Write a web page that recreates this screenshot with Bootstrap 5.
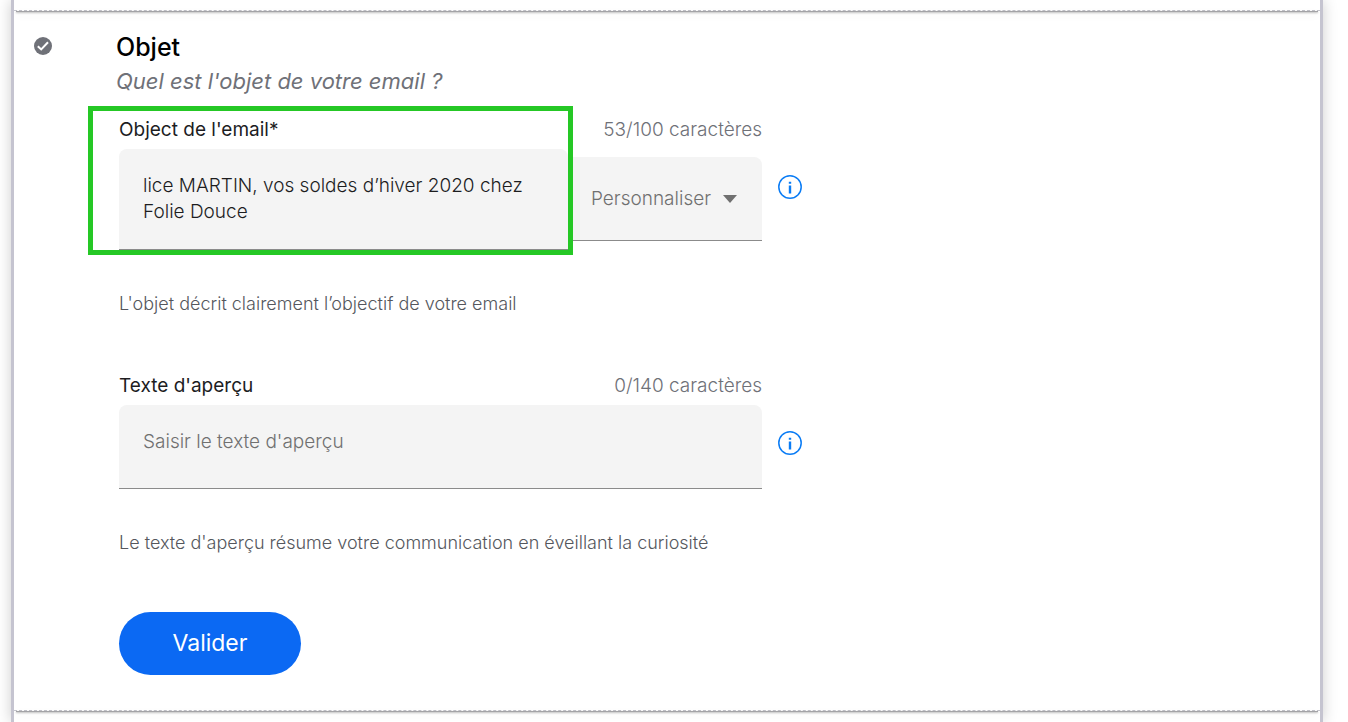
<!DOCTYPE html>
<html lang="fr">
<head>
<meta charset="utf-8">
<meta name="viewport" content="width=device-width, initial-scale=1">
<title>Objet de l'email</title>
<link href="https://cdn.jsdelivr.net/npm/bootstrap@5.3.0/dist/css/bootstrap.min.css" rel="stylesheet">
<style>
body { font-family: Inter, "Open Sans", sans-serif; font-size: 19px; line-height: 26px; color: #1d1d1f; background: #fff; }
.frame { margin: 0 25px 0 11px; border: solid #c5c4d0; border-width: 0 3px; box-shadow: 0 0 14px rgba(0,0,0,.2); background: #fff; }
.step { border-bottom: 1px dashed #c5c5cc; }
.step::after { content: ""; display: block; position: absolute; left: 2px; right: 2px; top: 100%; height: 1px; margin-top: 1px; background: #a3a3a6; box-shadow: 0 1px 2px rgba(0,0,0,.35), 0 3px 8px rgba(0,0,0,.12); }
.step-prev { height: 11px; }
.step-current { padding: 20px 20px 35px; }
.step-mark { width: 18px; height: 18px; margin-top: 6px; }
.step-body { margin-left: 67px; max-width: 685px; }
.step-head { margin: 0 0 19px -3px; }
.step-title { font-size: 25px; line-height: 32px; font-weight: 500; color: #000; }
.step-sub { font-size: 22px; line-height: 34px; font-style: italic; font-weight: 400; color: #6f7178; padding-top: 1px; }
.grey { color: #6f7178; }
.count { font-weight: 300; }
.field-label { font-weight: 400; }
.field-wrap { min-width: 0; }
.soft { border: 0; border-bottom: 1px solid #8b8b8b; border-radius: 8px 8px 0 0; background-color: #f4f4f4; font-weight: 300; line-height: 26px; padding: 24px; resize: none; font-size: 19px; }
.soft:focus { background-color: #f4f4f4; }
.soft::placeholder { color: #707070; opacity: 1; }
.subject { height: 101px; color: #1d1d1f; overflow: hidden; }
.preview { height: 84px; overflow: hidden; }
.perso { width: 194px; height: 84px; color: #707070; border-radius: 0 8px 0 0; appearance: none; padding: 24px 20px 24px 23px;
  background-image: url("data:image/svg+xml,%3Csvg xmlns='http://www.w3.org/2000/svg' viewBox='0 0 14 8'%3E%3Cpath d='M0 0h14L7 8z' fill='%23707070'/%3E%3C/svg%3E");
  background-repeat: no-repeat; background-position: right 25px center; background-size: 14px 8px; }
.info-btn { width: 26px; height: 26px; margin-bottom: 33px; color: #0a7cf5; }
.info-top { margin-bottom: 50px; }
.hint { font-size: 18px; font-weight: 300; color: #55575d; padding-top: 41px; }
.focus-box { position: absolute; inset: -11px -5px -5px -31px; border: 5px solid #25c825; pointer-events: none; z-index: 2; }
.line-gap { margin-bottom: 6px; }
.count-gap { margin-bottom: 14px; }
.next-field { margin-top: 56px; }
.btn-go { background: #0b69f3; color: #fff; border: 0; border-radius: 32px; width: 182px; height: 63px; font-size: 23px; font-weight: 400; margin-top: 56px; }
.btn-go:hover { background: #0959d0; color: #fff; }
</style>
</head>
<body>
<main class="frame min-vh-100">
  <div class="step step-prev position-relative"></div>
  <section class="step step-current position-relative d-flex align-items-start">
    <svg class="step-mark flex-shrink-0" viewBox="0 0 18 18" aria-hidden="true"><circle cx="9" cy="9" r="9" fill="#6f7178"/><path d="M3.8 9.2l3.4 3.2L14 5.2" fill="none" stroke="#fff" stroke-width="2"/></svg>
    <div class="step-body flex-grow-1">
      <div class="step-head">
        <h1 class="step-title m-0">Objet</h1>
        <p class="step-sub m-0">Quel est l'objet de votre email ?</p>
      </div>
      <form>
        <div class="d-flex align-items-end">
          <div class="field-wrap flex-grow-1 d-flex">
            <div class="position-relative flex-grow-1 field-wrap">
              <label class="field-label d-block line-gap" for="subject">Object de l'email*</label>
              <textarea id="subject" class="form-control soft subject">lice MARTIN, vos soldes d’hiver 2020 chez Folie Douce</textarea>
              <div class="focus-box"></div>
            </div>
            <div class="text-end flex-shrink-0">
              <div class="count grey count-gap">53/100 caractères</div>
              <select class="form-control soft perso" aria-label="Personnaliser"><option>Personnaliser</option></select>
            </div>
          </div>
          <button type="button" class="btn p-0 border-0 info-btn info-top ms-3 flex-shrink-0 d-flex" aria-label="Aide sur l'objet"><svg viewBox="0 0 26 26" width="26" height="26" fill="none" stroke="currentColor"><circle cx="12" cy="13" r="11.2" stroke-width="1.5"/><path d="M12 11.5v8M12 7.7v2" stroke-width="2.4"/></svg></button>
        </div>
        <p class="hint m-0">L'objet décrit clairement l’objectif de votre email</p>
        <div class="d-flex align-items-end next-field">
          <div class="field-wrap flex-grow-1">
            <div class="d-flex justify-content-between line-gap">
              <label class="field-label" for="preview">Texte d'aperçu</label>
              <span class="count grey">0/140 caractères</span>
            </div>
            <textarea id="preview" class="form-control soft preview" placeholder="Saisir le texte d'aperçu"></textarea>
          </div>
          <button type="button" class="btn p-0 border-0 info-btn ms-3 flex-shrink-0 d-flex" aria-label="Aide sur l'aperçu"><svg viewBox="0 0 26 26" width="26" height="26" fill="none" stroke="currentColor"><circle cx="12" cy="13" r="11.2" stroke-width="1.5"/><path d="M12 11.5v8M12 7.7v2" stroke-width="2.4"/></svg></button>
        </div>
        <p class="hint m-0">Le texte d'aperçu résume votre communication en éveillant la curiosité</p>
        <button type="submit" class="btn btn-go">Valider</button>
      </form>
    </div>
  </section>
</main>
<script src="https://cdn.jsdelivr.net/npm/bootstrap@5.3.0/dist/js/bootstrap.bundle.min.js"></script>
</body>
</html>
